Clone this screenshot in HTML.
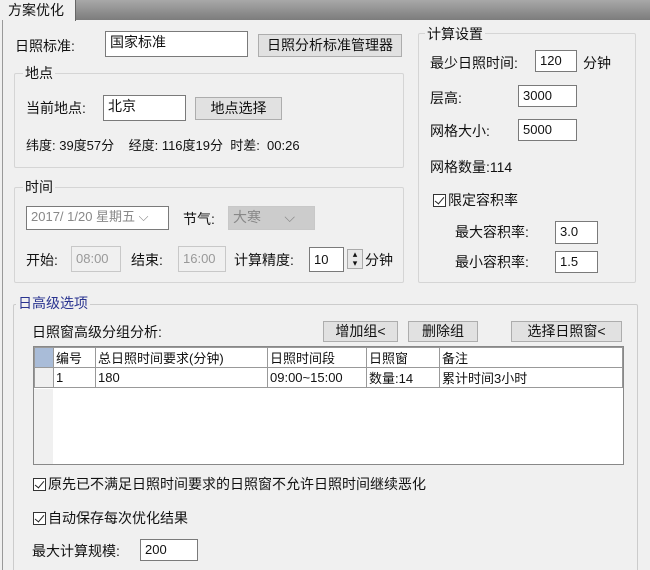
<!DOCTYPE html>
<html><head><meta charset="utf-8"><style>
*{box-sizing:border-box;margin:0;padding:0}
html,body{width:650px;height:570px;overflow:hidden}
body{background:#f0f0f0;font-family:"Liberation Sans","Noto Sans CJK SC",sans-serif;font-size:14px;color:#111;position:relative}
.a{position:absolute;white-space:nowrap;line-height:16px}
.in{position:absolute;background:#fff;border:1px solid #7a7a7a;padding-left:4px;font-size:13px;line-height:20px}
.dis{background:#f0f0f0;border-color:#c8c8c8;color:#999}
.btn{position:absolute;background:#e1e1e1;border:1px solid #adadad;text-align:center;font-size:14px;line-height:20px}
.grp{position:absolute;border:1px solid #d5d5d5;border-radius:2px}
.lg{position:absolute;background:#f0f0f0;padding:0 2px;line-height:16px}
.cb{display:inline-block;width:13px;height:13px;border:1px solid #333;background:#fff;vertical-align:-2px;margin-right:2px;position:relative}
.cb:after{content:"";position:absolute;left:3px;top:0px;width:4px;height:8px;border:solid #222;border-width:0 1.5px 1.5px 0;transform:rotate(40deg)}
table{border-collapse:collapse;font-size:13px}
td{border:1px solid #999;padding:0 2px;height:20px;white-space:nowrap}
</style></head><body>
<div style="position:absolute;left:0;top:0;width:650px;height:20px;background:linear-gradient(#a8a8a8,#7c7c7c)"></div>
<div style="position:absolute;left:0;top:0;width:76px;height:21px;background:#f0f0f0;border-right:1px solid #666;line-height:20px;padding-left:8px">方案优化</div>
<div style="position:absolute;left:2px;top:20px;width:1px;height:550px;background:#999"></div>

<div class="a" style="left:15px;top:38px">日照标准:</div>
<div class="in" style="left:105px;top:31px;width:143px;height:26px;font-size:14px">国家标准</div>
<div class="btn" style="left:258px;top:34px;width:144px;height:23px">日照分析标准管理器</div>

<div class="grp" style="left:14px;top:73px;width:390px;height:95px"></div>
<div class="lg" style="left:23px;top:65px">地点</div>
<div class="a" style="left:26px;top:100px">当前地点:</div>
<div class="in" style="left:103px;top:95px;width:83px;height:26px;font-size:14px">北京</div>
<div class="btn" style="left:195px;top:97px;width:87px;height:23px">地点选择</div>
<div class="a" style="left:26px;top:138px;font-size:13px">纬度: 39度57分&nbsp;&nbsp;&nbsp; 经度: 116度19分&nbsp;&nbsp;时差:&nbsp;&nbsp;00:26</div>

<div class="grp" style="left:14px;top:187px;width:390px;height:96px"></div>
<div class="lg" style="left:23px;top:179px">时间</div>
<div class="in" style="left:26px;top:206px;width:143px;height:24px;color:#888;font-size:13px">2017/ 1/20 星期五 ⌵</div>
<div class="a" style="left:183px;top:211px">节气:</div>
<div class="in dis" style="left:228px;top:206px;width:87px;height:24px;background:#ccc;color:#888;font-size:14px">大寒&nbsp;&nbsp;&nbsp;&nbsp;&nbsp;&nbsp;⌵</div>
<div class="a" style="left:26px;top:252px">开始:</div>
<div class="in dis" style="left:71px;top:246px;width:50px;height:26px;line-height:24px">08:00</div>
<div class="a" style="left:131px;top:252px">结束:</div>
<div class="in dis" style="left:178px;top:246px;width:48px;height:26px;line-height:24px">16:00</div>
<div class="a" style="left:234px;top:252px">计算精度:</div>
<div class="in" style="left:309px;top:247px;width:35px;height:25px;line-height:23px">10</div>
<div class="a" style="left:347px;top:249px;width:16px;height:20px;border:1px solid #aaa;background:#e8e8e8;font-size:9px;line-height:9px;text-align:center">▴<br>▾</div>
<div class="a" style="left:365px;top:252px">分钟</div>

<div class="grp" style="left:418px;top:33px;width:218px;height:250px"></div>
<div class="lg" style="left:425px;top:26px">计算设置</div>
<div class="a" style="left:430px;top:55px">最少日照时间:</div>
<div class="in" style="left:535px;top:50px;width:42px;height:22px">120</div>
<div class="a" style="left:583px;top:55px">分钟</div>
<div class="a" style="left:430px;top:90px">层高:</div>
<div class="in" style="left:518px;top:85px;width:59px;height:22px">3000</div>
<div class="a" style="left:430px;top:123px">网格大小:</div>
<div class="in" style="left:518px;top:119px;width:59px;height:22px">5000</div>
<div class="a" style="left:430px;top:159px">网格数量:114</div>
<div class="a" style="left:433px;top:192px"><span class="cb"></span>限定容积率</div>
<div class="a" style="left:455px;top:224px">最大容积率:</div>
<div class="in" style="left:555px;top:221px;width:43px;height:23px">3.0</div>
<div class="a" style="left:455px;top:254px">最小容积率:</div>
<div class="in" style="left:555px;top:251px;width:43px;height:22px">1.5</div>

<div class="grp" style="left:13px;top:304px;width:625px;height:270px;border-color:#ccc"></div>
<div class="lg" style="left:16px;top:295px;color:#2a3490">日高级选项</div>
<div class="a" style="left:32px;top:324px">日照窗高级分组分析:</div>
<div class="btn" style="left:323px;top:321px;width:75px;height:21px;line-height:19px">增加组&lt;</div>
<div class="btn" style="left:408px;top:321px;width:70px;height:21px;line-height:19px">删除组</div>
<div class="btn" style="left:511px;top:321px;width:111px;height:21px;line-height:19px">选择日照窗&lt;</div>
<div style="position:absolute;left:33px;top:346px;width:591px;height:119px;background:#fff;border:1px solid #888;overflow:hidden">
<table style="width:589px">
<tr style="background:#fff"><td style="width:19px;background:#a9bcd8;border-color:#999"></td><td style="width:42px">编号</td><td style="width:172px">总日照时间要求(分钟)</td><td style="width:99px">日照时间段</td><td style="width:73px">日照窗</td><td>备注</td></tr>
<tr><td style="background:#f0f0f0"></td><td>1</td><td>180</td><td>09:00~15:00</td><td>数量:14</td><td>累计时间3小时</td></tr>
</table>
<div style="position:absolute;left:0;top:42px;width:19px;height:80px;background:#f0f0f0"></div>
</div>
<div class="a" style="left:33px;top:476px"><span class="cb"></span>原先已不满足日照时间要求的日照窗不允许日照时间继续恶化</div>
<div class="a" style="left:33px;top:510px"><span class="cb"></span>自动保存每次优化结果</div>
<div class="a" style="left:32px;top:543px">最大计算规模:</div>
<div class="in" style="left:140px;top:539px;width:58px;height:22px">200</div>
</body></html>
